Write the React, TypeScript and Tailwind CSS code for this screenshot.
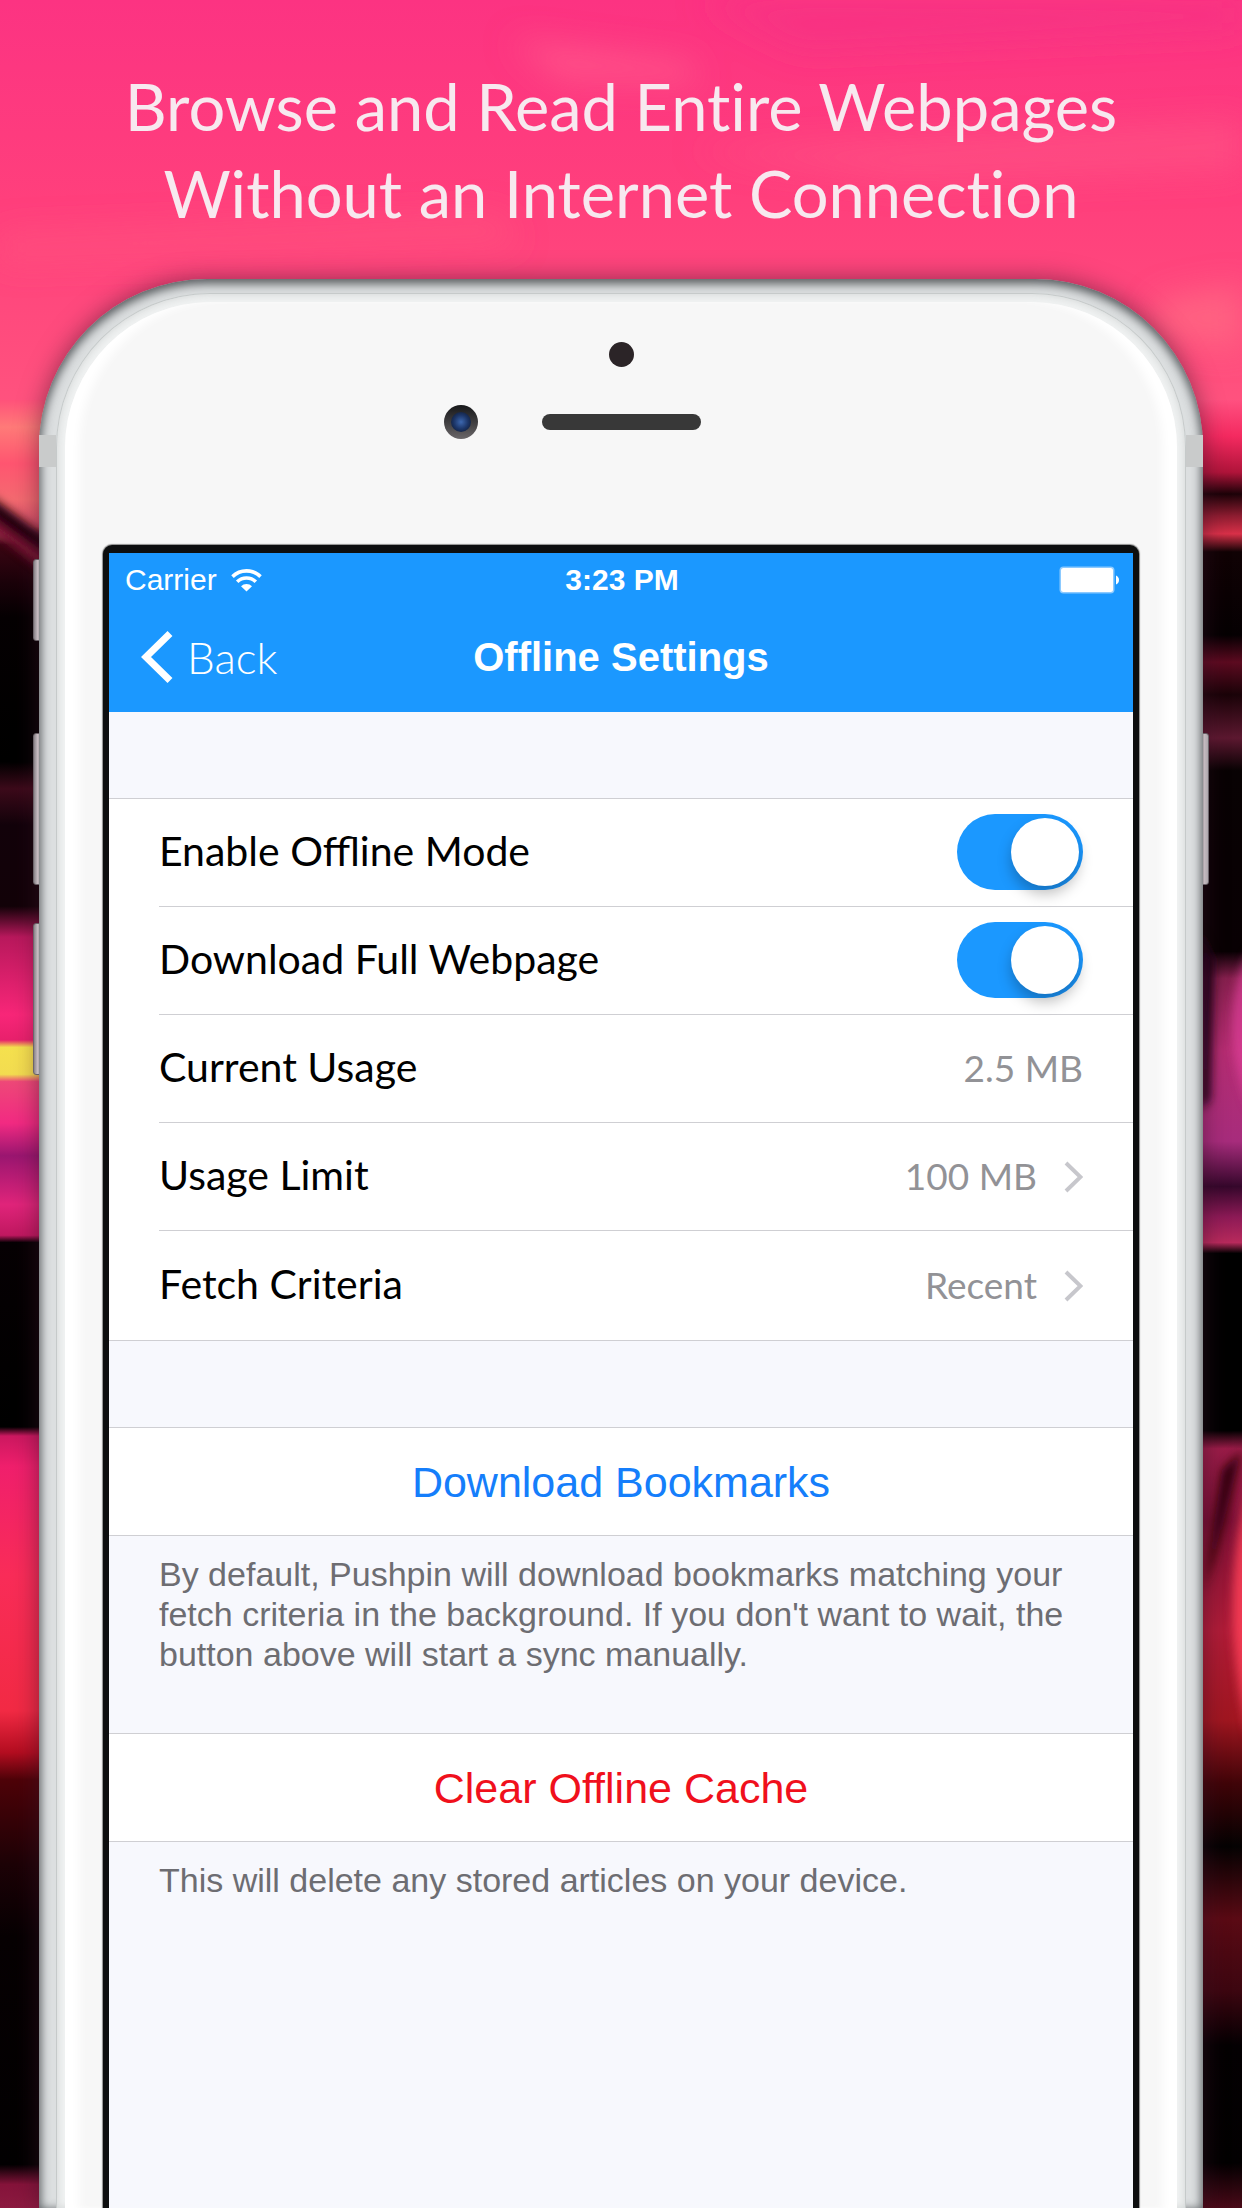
import type { ReactNode } from "react";

const body = "font-['Lato','Open_Sans',sans-serif]";

function Backdrop() {
  return (
    <svg
      className="absolute inset-0 -z-10 h-full w-full"
      viewBox="0 0 1242 2208"
      preserveAspectRatio="none"
      aria-hidden="true"
    >
      <defs>
        <linearGradient id="sky" x1="0" y1="0" x2="0" y2="1">
          <stop offset="0" stopColor="#fc3382" />
          <stop offset="0.5" stopColor="#ff3f7c" />
          <stop offset="1" stopColor="#ff527e" />
        </linearGradient>
        <linearGradient id="left" x1="0" y1="400" x2="0" y2="2208" gradientUnits="userSpaceOnUse">
          <stop offset="0" stopColor="#ff527a" />
          <stop offset="0.015" stopColor="#ff7a78" />
          <stop offset="0.035" stopColor="#ff5570" />
          <stop offset="0.055" stopColor="#f46a70" />
          <stop offset="0.07" stopColor="#d8506a" />
          <stop offset="0.08" stopColor="#3a0512" />
          <stop offset="0.1" stopColor="#1c020a" />
          <stop offset="0.12" stopColor="#050002" />
          <stop offset="0.2" stopColor="#000" />
          <stop offset="0.215" stopColor="#3c0a1a" />
          <stop offset="0.235" stopColor="#12020a" />
          <stop offset="0.28" stopColor="#120208" />
          <stop offset="0.297" stopColor="#b8185c" />
          <stop offset="0.34" stopColor="#f82678" />
          <stop offset="0.354" stopColor="#e8206c" />
          <stop offset="0.358" stopColor="#f5e14e" />
          <stop offset="0.373" stopColor="#f3dc50" />
          <stop offset="0.377" stopColor="#ee4878" />
          <stop offset="0.4" stopColor="#f22a82" />
          <stop offset="0.418" stopColor="#9a1670" />
          <stop offset="0.445" stopColor="#e0247a" />
          <stop offset="0.462" stopColor="#c01860" />
          <stop offset="0.466" stopColor="#060003" />
          <stop offset="0.568" stopColor="#000" />
          <stop offset="0.573" stopColor="#cc1860" />
          <stop offset="0.59" stopColor="#f01f6c" />
          <stop offset="0.65" stopColor="#f92c58" />
          <stop offset="0.725" stopColor="#f22a44" />
          <stop offset="0.748" stopColor="#b40d20" />
          <stop offset="0.763" stopColor="#4e0208" />
          <stop offset="0.81" stopColor="#1c0206" />
          <stop offset="0.85" stopColor="#060002" />
          <stop offset="0.976" stopColor="#020001" />
          <stop offset="0.987" stopColor="#85133a" />
          <stop offset="1" stopColor="#8c1a40" />
        </linearGradient>
        <linearGradient id="right" x1="0" y1="400" x2="0" y2="2208" gradientUnits="userSpaceOnUse">
          <stop offset="0" stopColor="#ff5080" />
          <stop offset="0.02" stopColor="#f42a60" />
          <stop offset="0.04" stopColor="#b0143a" />
          <stop offset="0.052" stopColor="#1c0208" />
          <stop offset="0.064" stopColor="#8c1c30" />
          <stop offset="0.074" stopColor="#d83048" />
          <stop offset="0.084" stopColor="#100204" />
          <stop offset="0.13" stopColor="#050002" />
          <stop offset="0.145" stopColor="#5c0a20" />
          <stop offset="0.163" stopColor="#1a0308" />
          <stop offset="0.187" stopColor="#5c1830" />
          <stop offset="0.205" stopColor="#080203" />
          <stop offset="0.305" stopColor="#080003" />
          <stop offset="0.32" stopColor="#86204e" />
          <stop offset="0.36" stopColor="#b52d72" />
          <stop offset="0.41" stopColor="#a72c7c" />
          <stop offset="0.435" stopColor="#35072b" />
          <stop offset="0.452" stopColor="#8d1a56" />
          <stop offset="0.466" stopColor="#b82a5c" />
          <stop offset="0.472" stopColor="#000" />
          <stop offset="0.57" stopColor="#000" />
          <stop offset="0.58" stopColor="#9a1c48" />
          <stop offset="0.62" stopColor="#7a1035" />
          <stop offset="0.68" stopColor="#b01c38" />
          <stop offset="0.73" stopColor="#a01620" />
          <stop offset="0.765" stopColor="#400408" />
          <stop offset="0.8" stopColor="#040202" />
          <stop offset="0.84" stopColor="#5a0a14" />
          <stop offset="0.88" stopColor="#3c0610" />
          <stop offset="0.91" stopColor="#040002" />
          <stop offset="0.975" stopColor="#020001" />
          <stop offset="1" stopColor="#4a0a18" />
        </linearGradient>
        <filter id="soft" x="-100%" y="-50%" width="300%" height="200%">
          <feGaussianBlur stdDeviation="5" />
        </filter>
        <filter id="softer" x="-50%" y="-100%" width="200%" height="300%">
          <feGaussianBlur stdDeviation="16" />
        </filter>
      </defs>
      <rect width="1242" height="402" fill="url(#sky)" />
      <rect y="400" width="621" height="1808" fill="url(#left)" />
      <rect x="621" y="400" width="621" height="1808" fill="url(#right)" />
      <g filter="url(#softer)">
        <path d="M510 40 L690 62 L700 84 L560 80Z" fill="#ff5c8c" opacity="0.7" />
        <path d="M690 150 L1242 120 V170 L900 182Z" fill="#ff5a88" opacity="0.5" />
        <path d="M0 235 L500 215 L520 245 L0 262Z" fill="#ff5580" opacity="0.5" />
        <path d="M1160 300 L1242 285 V350 L1150 335Z" fill="#ff7a88" opacity="0.5" />
        <path d="M700 0 H1242 V30 L800 50Z" fill="#f53084" opacity="0.6" />
      </g>
      <g filter="url(#soft)">
        <path d="M-10 496 L50 540 V560 L-10 530Z" fill="#1a0208" />
        <path d="M-10 528 L50 575 V560 L-10 516Z" fill="#7a1434" />
        <path d="M1250 1480 Q1216 1600 1250 1740Z" fill="#ff4058" opacity="0.85" />
        <path d="M1250 950 Q1214 1020 1250 1110Z" fill="#e0409a" opacity="0.7" />
        <path d="M1200 930 L1214 960 L1210 1100 L1200 1110Z" fill="#1c0414" />
        <path d="M1242 1450 L1214 1560 L1204 1590 L1222 1470Z" fill="#30020c" />
      </g>
    </svg>
  );
}

function WifiIcon() {
  return (
    <svg className="h-[23px] w-[31px]" viewBox="0 0 31 23" fill="none" aria-label="Wi-Fi">
      <path d="M1.5 7.6A20 20 0 0 1 29.5 7.6" stroke="#fff" strokeWidth="3.6" />
      <path d="M6.2 12.8A13.3 13.3 0 0 1 24.8 12.8" stroke="#fff" strokeWidth="3.6" />
      <path d="M10 17.2A7.8 7.8 0 0 1 21 17.2L15.5 22.6Z" fill="#fff" />
    </svg>
  );
}

function BatteryIcon() {
  return (
    <svg className="h-[28px] w-[60px]" viewBox="0 0 60 28" aria-label="Battery full">
      <rect x="0.5" y="0.5" width="55" height="27" rx="4" fill="#8ccaff" />
      <rect x="2" y="2" width="52" height="24" rx="2.5" fill="#fff" />
      <path d="M57 9.500Q60 11 60 14Q60 17 57 18.500Z" fill="#fff" />
    </svg>
  );
}

function Disclosure() {
  return (
    <svg className="ml-[27px] h-[32px] w-[19px]" viewBox="0 0 19 32" fill="none" aria-hidden="true">
      <path d="M2 2L16.5 16L2 30" stroke="#c7c7cc" strokeWidth="4" />
    </svg>
  );
}

function Row({ children, last }: { children: ReactNode; last?: boolean }) {
  return (
    <li className="pl-[50px]">
      <div
        className={
          last
            ? "flex h-[109px] items-center pr-[50px]"
            : "flex h-[108px] items-center border-b border-[#cfcfd3] pr-[50px]"
        }
      >
        {children}
      </div>
    </li>
  );
}

function SwitchRow({ id, label }: { id: string; label: string }) {
  return (
    <Row>
      <label htmlFor={id} className="flex-1 pb-[4px] text-[41px] leading-[48px]">
        {label}
      </label>
      <input
        id={id}
        type="checkbox"
        role="switch"
        defaultChecked
        className="mb-[2px] h-[76px] w-[126px] appearance-none rounded-full bg-[#d5d5da] p-[4px] before:block before:size-[68px] before:rounded-full before:bg-white before:shadow-[0_8px_14px_rgba(0,0,0,0.25)] checked:bg-[#1b98ff] checked:before:ml-[50px]"
      />
    </Row>
  );
}

function LinkRow({ label, value, last }: { label: string; value: string; last?: boolean }) {
  return (
    <Row last={last}>
      <button type="button" className="flex h-full w-full items-center text-left">
        <span className="flex-1 pb-[4px] text-[41px] leading-[48px]">{label}</span>
        <span className="pb-[2px] text-[37px] leading-[48px] text-[#929296]">{value}</span>
        <Disclosure />
      </button>
    </Row>
  );
}

function Action({ label, color }: { label: string; color: string }) {
  return (
    <button
      type="button"
      className={`h-[109px] w-full border-y border-[#cfcfd3] bg-white text-[43px] leading-[48px] ${color}`}
    >
      {label}
    </button>
  );
}

function Screen() {
  return (
    <div className="flex flex-1 flex-col bg-[#f7f8fd]">
      <header className="h-[159px] bg-[#1b98ff] text-white">
        <div className="grid grid-cols-3 items-center pt-[9px] pr-[14px] pl-[16px] text-[30px] leading-[36px]">
          <div className="flex items-center gap-[14px]">
            <span>Carrier</span>
            <WifiIcon />
          </div>
          <div className="text-center font-bold">3:23 PM</div>
          <div className="flex justify-end">
            <BatteryIcon />
          </div>
        </div>
        <div className="grid grid-cols-3 items-center pt-[29px]">
          <button type="button" className={`flex items-center gap-[14px] pl-[32px] text-[44px] leading-[60px] font-light ${body}`}>
            <svg className="h-[52px] w-[32px]" viewBox="0 0 32 52" fill="none" aria-hidden="true">
              <path d="M29 2.5L5 26L29 49.5" stroke="#fff" strokeWidth="7" />
            </svg>
            Back
          </button>
          <h2 className="text-center text-[40px] leading-[60px] font-bold whitespace-nowrap">Offline Settings</h2>
        </div>
      </header>

      <ul className={`mt-[86px] border-y border-[#cfcfd3] bg-white text-black ${body}`}>
        <SwitchRow id="offline-mode" label="Enable Offline Mode" />
        <SwitchRow id="full-webpage" label="Download Full Webpage" />
        <Row>
          <span className="flex-1 pb-[4px] text-[41px] leading-[48px]">Current Usage</span>
          <span className="pb-[2px] text-[37px] leading-[48px] text-[#929296]">2.5 MB</span>
        </Row>
        <LinkRow label="Usage Limit" value="100 MB" />
        <LinkRow label="Fetch Criteria" value="Recent" last />
      </ul>

      <div className="mt-[86px]">
        <Action label="Download Bookmarks" color="text-[#157efb]" />
        <p className="px-[50px] pt-[18px] text-[34px] leading-[40px] text-[#6d6d72]">
          By default, Pushpin will download bookmarks matching your fetch criteria in the background. If you don't want to
          wait, the button above will start a sync manually.
        </p>
      </div>

      <div className="mt-[59px]">
        <Action label="Clear Offline Cache" color="text-[#f0101c]" />
        <p className="px-[50px] pt-[18px] text-[34px] leading-[40px] text-[#6d6d72]">
          This will delete any stored articles on your device.
        </p>
      </div>
    </div>
  );
}

const sideKey =
  "absolute w-[9px] rounded-[3px] border border-[#77787a] bg-linear-to-r from-[#9b9d9f] via-[#f2f2f2] to-[#c8cacb]";

function Phone() {
  return (
    <div className="relative mx-[39px] mt-[42px] flex flex-1 flex-col">
      <span className={`${sideKey} top-[280px] -left-[6px] h-[82px]`} />
      <span className={`${sideKey} top-[454px] -left-[6px] h-[152px]`} />
      <span className={`${sideKey} top-[644px] -left-[6px] h-[152px]`} />
      <span className={`${sideKey} top-[454px] -right-[6px] h-[152px]`} />
      <div className="relative flex flex-1 flex-col rounded-t-[168px] bg-[#dcdfe0] px-[17px] pt-[14px] shadow-[0_0_24px_rgba(60,20,40,0.55),inset_0_3px_10px_2px_rgba(60,64,68,0.8)]">
        <span className="absolute top-[156px] left-0 h-[32px] w-[17px] bg-[#c9cbcb]" />
        <span className="absolute top-[156px] right-0 h-[32px] w-[17px] bg-[#c9cbcb]" />
        <div className="flex flex-1 flex-col rounded-t-[154px] border-x border-t border-[#c6caca] bg-[#f0f2f2] px-[8px] pt-[8px] shadow-[inset_0_0_8px_rgba(150,155,155,0.35)]">
          <div className="flex flex-1 flex-col rounded-t-[146px] bg-[#f7f7f7] px-[38px] shadow-[inset_18px_0_10px_-4px_#fff,inset_-18px_0_10px_-4px_#fff]">
            <div className="flex h-[243px] flex-col items-center pt-[40px]">
              <div className="size-[25px] rounded-full bg-[#2b2427]" />
              <div className="mt-[38px] grid w-full grid-cols-[1fr_auto_1fr] items-center">
                <div className="mr-[64px] flex size-[34px] items-center justify-center justify-self-end rounded-full bg-linear-to-b from-[#17181a] to-[#6b6769]">
                  <div className="size-[20px] rounded-full bg-radial from-[#3d68b0] via-[#1c3567] to-[#0c1424]" />
                </div>
                <div className="h-[16px] w-[159px] rounded-full bg-[#383838]" />
              </div>
            </div>
            <div className="flex flex-1 flex-col rounded-t-[9px] bg-[#0d0e0f] px-[6px] pt-[8px] shadow-[0_0_1px_1px_#8c8c8c]">
              <Screen />
            </div>
          </div>
        </div>
      </div>
    </div>
  );
}

export default function App() {
  return (
    <main className="relative isolate flex min-h-screen flex-col overflow-hidden font-['Liberation_Sans',Arial,sans-serif]">
      <Backdrop />
      <h1 className="pt-[63px] text-center font-['Lato',sans-serif] text-[65px] leading-[87px] font-normal text-[#f7e9ef] [font-variant-ligatures:none]">
        Browse and Read Entire Webpages
        <br />
        Without an Internet Connection
      </h1>
      <Phone />
    </main>
  );
}
